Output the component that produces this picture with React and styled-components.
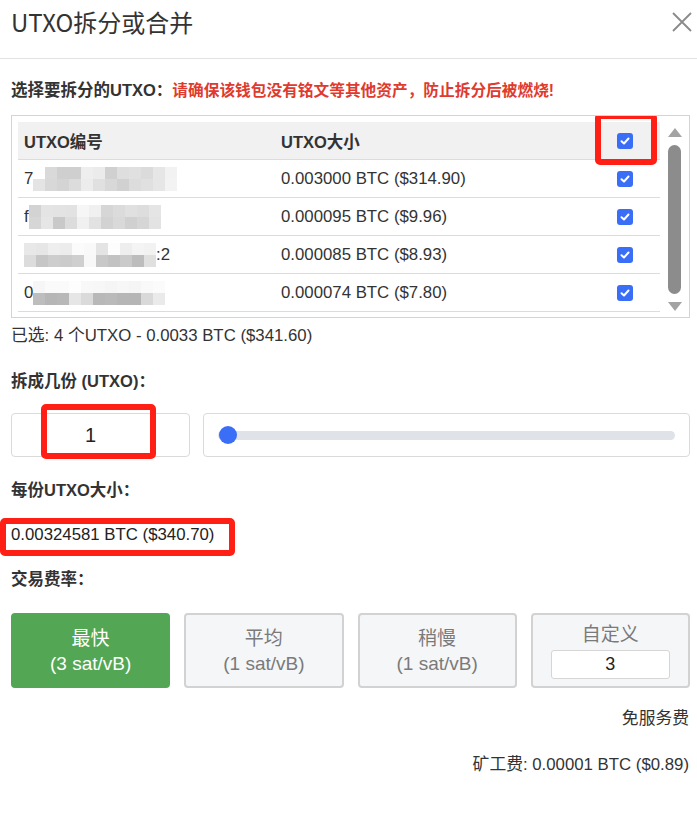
import React from 'react';
import styled, { createGlobalStyle } from 'styled-components';

const GlobalStyle = createGlobalStyle`
  html, body { margin: 0; padding: 0; background: #fff; }
  body {
    font-family: "Liberation Sans", Arial, "Noto Sans CJK SC", sans-serif;
    color: #333;
  }
  * { box-sizing: border-box; }
`;

const utxos = [
  { head: '7', tail: '', size: '0.003000 BTC ($314.90)', shades: [
    ['#fff','#d9d9d9','#cfcfcf','#cfcfcf','#eeeeee','#ebebeb','#d0d0d0','#dedede','#e0e0e0','#dbdbdb','#e6e6e6','#f2f2f2'],
    ['#e4e4e4','#d8d8d8','#d4d4d4','#dcdcdc','#ececec','#e0e0e0','#d8d8d8','#d1d1d1','#dcdcdc','#e0e0e0','#e6e6e6','#f3f3f3'],
  ]},
  { head: 'f', tail: '', size: '0.000095 BTC ($9.96)', shades: [
    ['#d3d3d3','#e4e4e4','#e3e3e3','#e2e2e2','#f6f6f6','#f0f0f0','#d6d6d6','#dbdbdb','#e0e0e0','#dddddd','#e5e5e5','#fff'],
    ['#d6d6d6','#e6e6e6','#c9c9c9','#dcdcdc','#f0f0f0','#e2e2e2','#d2d2d2','#d9d9d9','#d0d0d0','#d6d6d6','#e3e3e3','#fff'],
  ]},
  { head: '', tail: ':2', size: '0.000085 BTC ($8.93)', shades: [
    ['#e8e8e8','#e6e6e6','#eeeeee','#ececec','#fbfbfb','#f9f9f9','#e4e4e4','#fdfdfd','#eeeeee','#f4f4f4','#f2f2f2'],
    ['#dcdcdc','#c6c6c6','#cdcdcd','#cbcbcb','#cfcfcf','#f8f8f8','#c8c8c8','#c2c2c2','#cacaca','#bdbdbd','#e0e0e0'],
  ]},
  { head: '0', tail: '', size: '0.000074 BTC ($7.80)', shades: [
    ['#f6f6f6','#fafafa','#fafafa','#fdfdfd','#f8f8f8','#f7f7f7','#f5f5f5','#f7f7f7','#f5f5f5','#f9f9f9','#fbfbfb','#fff'],
    ['#bdbdbd','#b6b6b6','#b8b8b8','#e6e6e6','#dadada','#b8b8b8','#bababa','#b6b6b6','#b5b5b5','#d9d9d9','#eaeaea','#fff'],
  ]},
];

const fees = [
  { name: '最快', rate: '(3 sat/vB)', active: true },
  { name: '平均', rate: '(1 sat/vB)' },
  { name: '稍慢', rate: '(1 sat/vB)' },
];

function Check() {
  return (
    <CheckBox>
      <svg width="10" height="8" viewBox="0 0 10 8">
        <path d="M1.5 4.2 L4 6.5 L8.5 1.5" fill="none" stroke="#fff" strokeWidth="2" strokeLinecap="round" strokeLinejoin="round" />
      </svg>
    </CheckBox>
  );
}

export default function App() {
  return (
    <Page>
      <GlobalStyle />
      <Header>
        <Title>UTXO拆分或合并</Title>
        <Close>
          <svg width="20" height="20" viewBox="0 0 20 20">
            <path d="M1 1 L19 19 M19 1 L1 19" stroke="#8a8a8a" strokeWidth="1.8" />
          </svg>
        </Close>
      </Header>

      <Body>
        <Label>
          选择要拆分的UTXO：<Warn>请确保该钱包没有铭文等其他资产，防止拆分后被燃烧!</Warn>
        </Label>

        <TableBox>
          <TableArea>
            <Row head>
              <IdCell>UTXO编号</IdCell>
              <SizeCell>UTXO大小</SizeCell>
              <CheckCell>
                <Check />
                <Mark style={{ left: 5, top: -20, width: 62, height: 52 }} />
              </CheckCell>
            </Row>
            {utxos.map((u, i) => (
              <Row key={i}>
                <IdCell>
                  {u.head}
                  <Mosaic $cols={u.shades[0].length}>
                    {u.shades.flat().map((c, j) => (
                      <Cell key={j} style={{ background: c }} />
                    ))}
                  </Mosaic>
                  {u.tail}
                </IdCell>
                <SizeCell>{u.size}</SizeCell>
                <CheckCell><Check /></CheckCell>
              </Row>
            ))}
          </TableArea>
          <ScrollBar>
            <Arrow />
            <Thumb />
            <Arrow down />
          </ScrollBar>
        </TableBox>

        <Plain>已选: 4 个UTXO - 0.0033 BTC ($341.60)</Plain>

        <Label gap={21}>拆成几份 (UTXO)：</Label>
        <SplitRow>
          <CountBox>
            1
            <Mark style={{ left: 29, top: -10, width: 115, height: 55 }} />
          </CountBox>
          <SliderBox>
            <Track>
              <Knob />
            </Track>
          </SliderBox>
        </SplitRow>

        <Label gap={21}>每份UTXO大小：</Label>
        <Value>
          0.00324581 BTC ($340.70)
          <Mark style={{ left: -11, top: -5, width: 235, height: 38 }} />
        </Value>

        <Label gap={20}>交易费率：</Label>
        <FeeGrid>
          {fees.map((f) => (
            <FeeButton key={f.name} active={f.active}>
              <span>{f.name}</span>
              <span>{f.rate}</span>
            </FeeButton>
          ))}
          <FeeButton>
            <span>自定义</span>
            <CustomInput>3</CustomInput>
          </FeeButton>
        </FeeGrid>

        <Right gap={19}>免服务费</Right>
        <Right gap={22}>矿工费: 0.00001 BTC ($0.89)</Right>
      </Body>
    </Page>
  );
}

const Page = styled.div`
  width: 697px;
  min-height: 813px;
  background: #fff;
`;

const Header = styled.div`
  display: flex;
  justify-content: space-between;
  align-items: flex-start;
  padding: 6px 5px 20px 11px;
  border-bottom: 1px solid #e2e2e2;
`;

const Title = styled.div`
  font-family: "Noto Sans CJK SC", "Liberation Sans", sans-serif;
  font-size: 24px;
  line-height: 32px;
  color: #333;
`;

const Close = styled.div`
  padding-top: 6px;
  display: flex;
`;

const Body = styled.div`
  padding: 0 7px 0 11px;
`;

const Label = styled.div`
  margin-top: ${(p) => p.gap || 19}px;
  font-size: 16.5px;
  line-height: 24px;
  font-weight: bold;
  color: #333;
`;

const Warn = styled.span`
  color: #e03a2e;
  font-size: 15.7px;
`;

const TableBox = styled.div`
  margin-top: 12px;
  height: 203px;
  border: 1px solid #d4d4d4;
  display: flex;
  padding: 6px 0 0 6px;
  overflow: hidden;
`;

const TableArea = styled.div`
  flex: 1;
  display: flex;
  flex-direction: column;
`;

const Row = styled.div`
  display: grid;
  grid-template-columns: 257px 315px 70px;
  height: 38px;
  flex: none;
  align-items: center;
  border-bottom: 1px solid #dcdcdc;
  background: ${(p) => (p.head ? '#f1f1f1' : '#fff')};
  font-weight: ${(p) => (p.head ? 'bold' : 'normal')};
  font-size: ${(p) => (p.head ? '16.5px' : '16.8px')};
  color: #333;
`;

const IdCell = styled.div`
  display: flex;
  align-items: center;
  padding-left: 6px;
`;

const SizeCell = styled.div`
  padding-left: 6px;
`;

const CheckCell = styled.div`
  position: relative;
  display: flex;
  justify-content: center;
`;

const CheckBox = styled.div`
  width: 16px;
  height: 16px;
  border-radius: 3px;
  background: #3b6ef6;
  display: flex;
  align-items: center;
  justify-content: center;
`;

const Mosaic = styled.div`
  display: grid;
  grid-template-columns: repeat(${(p) => p.$cols}, 12px);
  grid-auto-rows: 12px;
`;

const Cell = styled.div``;

const ScrollBar = styled.div`
  width: 30px;
  display: flex;
  flex-direction: column;
  align-items: center;
  padding: 6px 0 6px;
  gap: 8px;
`;

const Arrow = styled.div`
  width: 0;
  height: 0;
  border-left: 7px solid transparent;
  border-right: 7px solid transparent;
  ${(p) => (p.down ? 'border-top: 9px solid #a3a3a3;' : 'border-bottom: 9px solid #a3a3a3;')}
`;

const Thumb = styled.div`
  width: 13px;
  flex: 1;
  border-radius: 7px;
  background: #8c8c8c;
`;

const Plain = styled.div`
  margin-top: 6px;
  font-size: 16.8px;
  line-height: 24px;
  color: #333;
`;

const SplitRow = styled.div`
  margin-top: 20px;
  display: flex;
  gap: 13px;
`;

const CountBox = styled.div`
  position: relative;
  width: 179px;
  height: 44px;
  border: 1px solid #dadada;
  border-radius: 4px;
  display: flex;
  align-items: center;
  justify-content: center;
  padding-right: 20px;
  font-size: 20px;
  color: #222;
`;

const SliderBox = styled.div`
  flex: 1;
  height: 44px;
  border: 1px solid #dadada;
  border-radius: 4px;
  display: flex;
  align-items: center;
  padding: 0 14px 0 14px;
`;

const Track = styled.div`
  position: relative;
  flex: 1;
  height: 9px;
  border-radius: 5px;
  background: #dfe2e6;
`;

const Knob = styled.div`
  position: absolute;
  left: 1px;
  top: -5px;
  width: 18px;
  height: 18px;
  border-radius: 50%;
  background: #3b6ef6;
`;

const Value = styled.div`
  position: relative;
  margin-top: 21px;
  font-size: 16.8px;
  line-height: 24px;
  color: #222;
`;

const Mark = styled.div`
  position: absolute;
  border: 6px solid #ff1f14;
  border-radius: 5px;
  pointer-events: none;
`;

const FeeGrid = styled.div`
  margin-top: 22px;
  display: grid;
  grid-template-columns: repeat(4, 1fr);
  gap: 14px;
`;

const FeeButton = styled.div`
  height: 75px;
  border-radius: 4px;
  border: 2px solid ${(p) => (p.active ? '#53a653' : '#d2d2d2')};
  background: ${(p) => (p.active ? '#53a653' : '#f5f6f8')};
  color: ${(p) => (p.active ? '#fff' : '#7a7a7a')};
  font-size: 19px;
  line-height: 25px;
  display: flex;
  flex-direction: column;
  align-items: center;
  justify-content: center;
`;

const CustomInput = styled.div`
  margin-top: 3px;
  width: 119px;
  height: 29px;
  border: 1px solid #d6d6d6;
  border-radius: 3px;
  background: #fff;
  color: #222;
  font-size: 18px;
  display: flex;
  align-items: center;
  justify-content: center;
`;

const Right = styled.div`
  margin-top: ${(p) => p.gap}px;
  text-align: right;
  font-size: 16.8px;
  line-height: 24px;
  color: #333;
  padding-right: 1px;
`;
